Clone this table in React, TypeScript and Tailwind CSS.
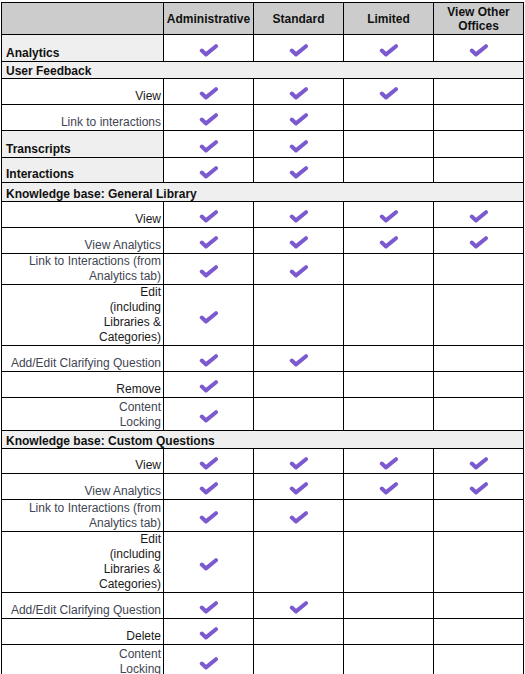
import React from "react";

const Check = () => (
  <svg width="20" height="13" viewBox="0 0 20 13" fill="none">
    <polyline
      points="2.8,6.6 7,10.4 17,2.2"
      stroke="#7b59cf"
      strokeWidth="4"
      strokeLinecap="round"
      strokeLinejoin="round"
    />
  </svg>
);

type RowDef =
  | { kind: "section"; label: string; h: string }
  | {
      kind: "row";
      label: React.ReactNode;
      bold?: boolean;
      dark?: boolean;
      h: string;
      checks: number;
    };

const rows: RowDef[] = [
  { kind: "row", label: "Analytics", bold: true, h: "h-[27px]", checks: 4 },
  { kind: "section", label: "User Feedback", h: "h-[17px]" },
  { kind: "row", label: "View", dark: true, h: "h-[26px]", checks: 3 },
  { kind: "row", label: "Link to interactions", h: "h-[26px]", checks: 2 },
  { kind: "row", label: "Transcripts", bold: true, h: "h-[27px]", checks: 2 },
  { kind: "row", label: "Interactions", bold: true, h: "h-[25px]", checks: 2 },
  { kind: "section", label: "Knowledge base: General Library", h: "h-[19px]" },
  { kind: "row", label: "View", dark: true, h: "h-[26px]", checks: 4 },
  { kind: "row", label: "View Analytics", h: "h-[26px]", checks: 4 },
  {
    kind: "row",
    label: (
      <>
        Link to Interactions (from
        <br />
        Analytics tab)
      </>
    ),
    h: "h-[31px]",
    checks: 2,
  },
  {
    kind: "row",
    label: (
      <>
        Edit
        <br />
        (including
        <br />
        Libraries &amp;
        <br />
        Categories)
      </>
    ),
    dark: true,
    h: "h-[61px]",
    checks: 1,
  },
  { kind: "row", label: "Add/Edit Clarifying Question", h: "h-[26px]", checks: 2 },
  { kind: "row", label: "Remove", dark: true, h: "h-[26px]", checks: 1 },
  {
    kind: "row",
    label: (
      <>
        Content
        <br />
        Locking
      </>
    ),
    h: "h-[33px]",
    checks: 1,
  },
  { kind: "section", label: "Knowledge base: Custom Questions", h: "h-[18px]" },
  { kind: "row", label: "View", dark: true, h: "h-[25px]", checks: 4 },
  { kind: "row", label: "View Analytics", h: "h-[26px]", checks: 4 },
  {
    kind: "row",
    label: (
      <>
        Link to Interactions (from
        <br />
        Analytics tab)
      </>
    ),
    h: "h-[32px]",
    checks: 2,
  },
  {
    kind: "row",
    label: (
      <>
        Edit
        <br />
        (including
        <br />
        Libraries &amp;
        <br />
        Categories)
      </>
    ),
    dark: true,
    h: "h-[61px]",
    checks: 1,
  },
  { kind: "row", label: "Add/Edit Clarifying Question", h: "h-[26px]", checks: 2 },
  { kind: "row", label: "Delete", dark: true, h: "h-[26px]", checks: 1 },
  {
    kind: "row",
    label: (
      <>
        Content
        <br />
        Locking
      </>
    ),
    h: "h-[33px]",
    checks: 1,
  },
];

const headers = [
  <>Administrative</>,
  <>Standard</>,
  <>Limited</>,
  <>
    View Other
    <br />
    Offices
  </>,
];

export default function App() {
  return (
    <div
      className="bg-white min-h-screen pt-[2px] pl-[1px] text-[12px]"
      style={{ fontFamily: '"Liberation Sans", Arial, sans-serif' }}
    >
      <div className="w-[523px] border-l border-t border-black">
        {/* header */}
        <div className="grid grid-cols-[162px_90px_90px_90px_90px] h-[32px]">
          <div className="bg-[#cccccc] border-r border-b border-black" />
          {headers.map((h, i) => (
            <div
              key={i}
              className="bg-[#cccccc] border-r border-b border-black flex items-center justify-center text-center font-bold leading-[14px] text-[#111]"
            >
              <div>{h}</div>
            </div>
          ))}
        </div>
        {rows.map((r, idx) =>
          r.kind === "section" ? (
            <div
              key={idx}
              className={`${r.h} bg-[#efefef] border-r border-b border-black flex items-end pl-[4px] font-bold leading-[14px] text-[#111]`}
            >
              {r.label}
            </div>
          ) : (
            <div
              key={idx}
              className={`grid grid-cols-[162px_90px_90px_90px_90px] ${r.h}`}
            >
              {r.bold ? (
                <div className="bg-[#efefef] border-r border-b border-black flex items-end pl-[4px] font-bold leading-[15px] text-[#111]">
                  {r.label}
                </div>
              ) : (
                <div
                  className={`border-r border-b border-black flex items-end justify-end text-right pr-[2px] leading-[15px] ${
                    r.dark ? "text-[#1a1a1a]" : "text-[#3f4552]"
                  }`}
                >
                  <div>{r.label}</div>
                </div>
              )}
              {[0, 1, 2, 3].map((c) => (
                <div
                  key={c}
                  className="border-r border-b border-black flex items-center justify-center pt-[4px]"
                >
                  {c < r.checks ? <Check /> : null}
                </div>
              ))}
            </div>
          )
        )}
      </div>
    </div>
  );
}
